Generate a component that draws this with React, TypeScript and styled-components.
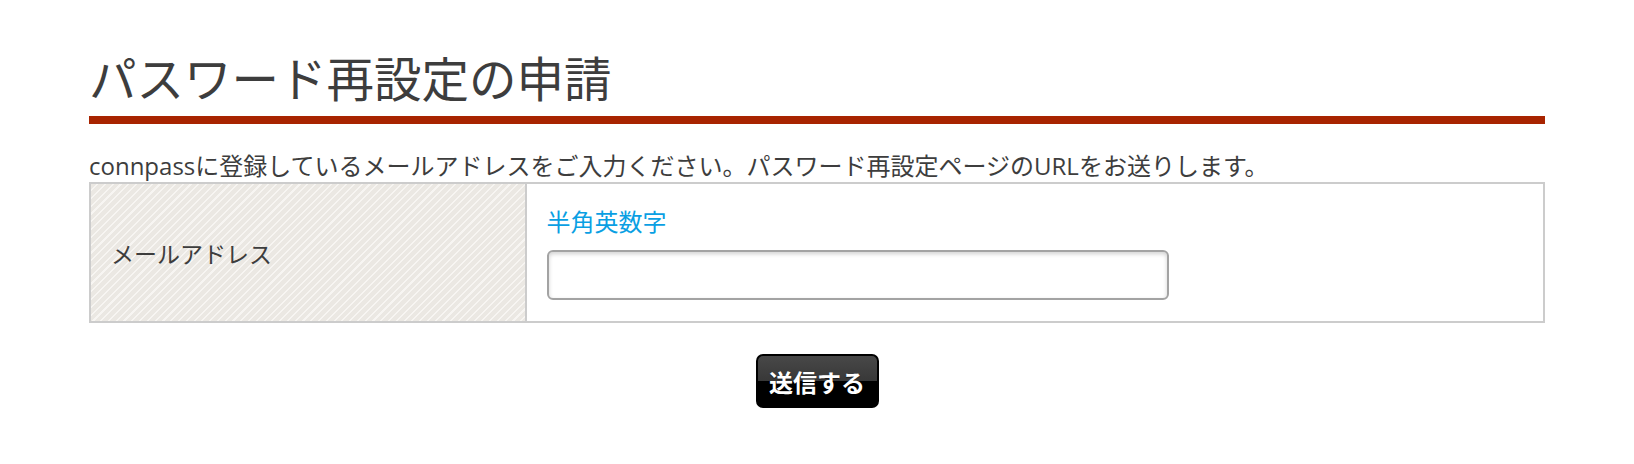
import React from "react";
import styled, { createGlobalStyle } from "styled-components";

const GlobalStyle = createGlobalStyle`
  html, body {
    margin: 0;
    padding: 0;
    background: #ffffff;
  }
  body {
    font-family: "Open Sans", "Noto Sans CJK JP", sans-serif;
    color: #3d3d3d;
  }
`;

const Page = styled.div`
  width: 1456px;
  margin: 0 auto;
  padding-top: 50px;
`;

const Title = styled.h1`
  margin: 0;
  font-size: 47.5px;
  font-weight: 400;
  line-height: 58px;
  color: #3d3d3d;
  padding-bottom: 8px;
  border-bottom: 8px solid #a82400;
`;

const Lead = styled.p`
  margin: 26px 0 0;
  font-size: 24px;
  line-height: 32px;
  color: #3d3d3d;
`;

const FormTable = styled.div`
  display: grid;
  grid-template-columns: 30% 1fr;
  border: 2px solid #cccccc;
`;

const HeadCell = styled.div`
  display: flex;
  align-items: center;
  padding: 0 20px;
  font-size: 23px;
  color: #3d3d3d;
  border-right: 2px solid #cccccc;
  background-color: #ebe8e3;
  background-image: repeating-linear-gradient(
    135deg,
    #ebe8e3 0px,
    #ebe8e3 4px,
    #f7f5f2 4px,
    #f7f5f2 5.5px
  );
`;

const BodyCell = styled.div`
  display: flex;
  flex-direction: column;
  align-items: flex-start;
  gap: 12px;
  padding: 22px 20px 21px;
`;

const Note = styled.span`
  font-size: 24px;
  line-height: 32px;
  color: #0a9fe3;
`;

const TextInput = styled.input`
  box-sizing: border-box;
  width: 622px;
  height: 50px;
  border: 2px solid #a3a3a3;
  border-radius: 6px;
  box-shadow: inset 0 2px 4px rgba(0, 0, 0, 0.18);
  background: #fff;
  font-size: 22px;
  padding: 0 10px;
  outline: none;
`;

const Actions = styled.div`
  display: flex;
  justify-content: center;
  padding-top: 31px;
`;

const SubmitButton = styled.button`
  box-sizing: border-box;
  width: 123px;
  height: 54px;
  border: 2px solid #000;
  border-radius: 7px;
  background: linear-gradient(
    to bottom,
    #484848 0%,
    #383838 50%,
    #000000 50%,
    #000000 100%
  );
  color: #ffffff;
  font-family: "Open Sans", "Noto Sans CJK JP", sans-serif;
  font-size: 24px;
  font-weight: 700;
  padding: 0;
  cursor: pointer;
  text-shadow: 0 1px 1px rgba(0, 0, 0, 0.6);
`;

export default function App() {
  return (
    <>
      <GlobalStyle />
      <Page>
        <Title>パスワード再設定の申請</Title>
        <Lead>
          connpassに登録しているメールアドレスをご入力ください。パスワード再設定ページのURLをお送りします。
        </Lead>
        <FormTable>
          <HeadCell>メールアドレス</HeadCell>
          <BodyCell>
            <Note>半角英数字</Note>
            <TextInput type="text" />
          </BodyCell>
        </FormTable>
        <Actions>
          <SubmitButton type="submit">送信する</SubmitButton>
        </Actions>
      </Page>
    </>
  );
}
